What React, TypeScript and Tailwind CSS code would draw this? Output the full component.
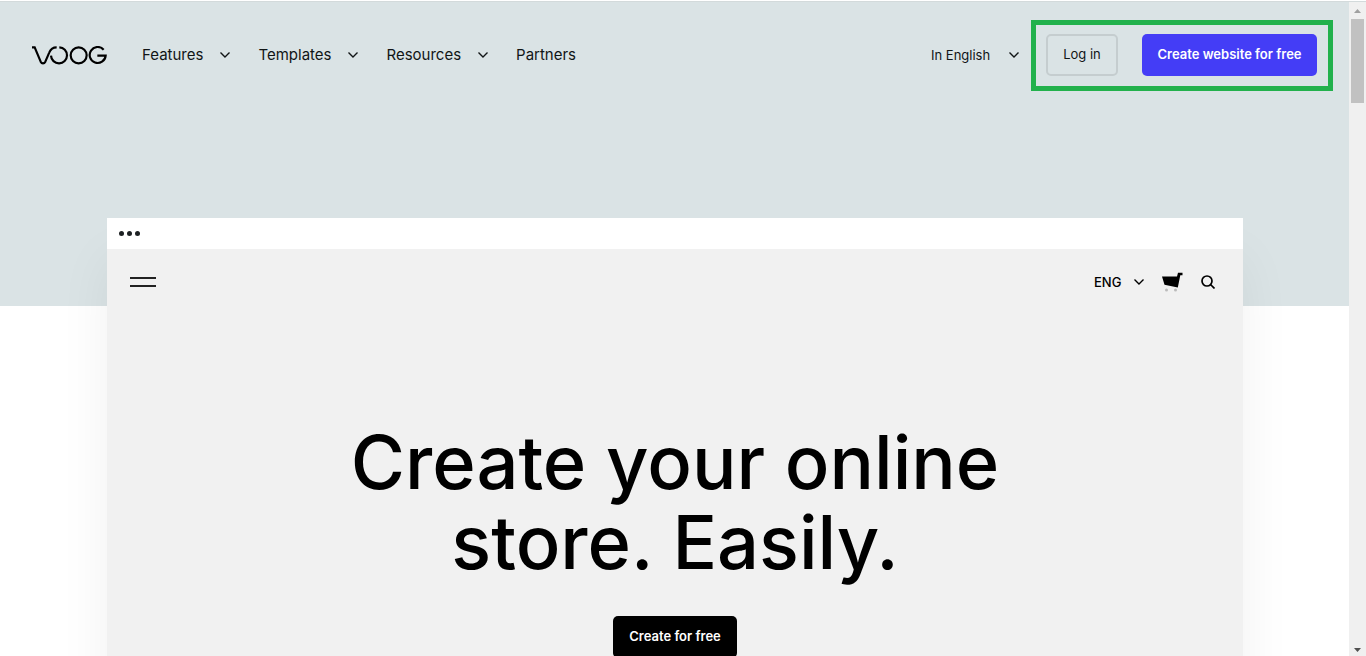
const NAV = [
  { label: 'Features', menu: true },
  { label: 'Templates', menu: true },
  { label: 'Resources', menu: true },
  { label: 'Partners', menu: false },
]

export default function App() {
  return (
    <div className="flex h-screen flex-col overflow-hidden bg-white font-['Inter','Liberation_Sans',sans-serif] text-[#111516]">
      <div className="mt-px h-px shrink-0 bg-[#d3dadb]" />
      <div className="flex min-h-0 flex-1">
        <div className="min-w-0 flex-1 overflow-hidden">
          <Header />
          <StorePreview />
        </div>
        <ScrollRail />
      </div>
    </div>
  )
}

function Header() {
  return (
    <header className="flex h-[304px] items-start justify-between bg-[#dae3e5] pt-[18px] pr-4 pl-8">
      <div className="flex h-[70px] items-center">
        <a href="#" aria-label="Voog" className="mr-[35px]"><Logo /></a>
        <nav className="flex items-center gap-7 text-[15px] leading-5">
          {NAV.map((item) =>
            item.menu ? (
              <button key={item.label} type="button" aria-haspopup="true" className="flex items-center gap-[17px]">
                {item.label}
                <Chevron />
              </button>
            ) : (
              <a key={item.label} href="#">{item.label}</a>
            )
          )}
        </nav>
      </div>
      <div className="flex items-start gap-3">
        <div className="flex h-[70px] items-center">
          <LanguageSelect label="Site language" options={['In English', 'Eesti']} className="gap-[18px] text-[13px]" />
        </div>
        <div className="flex gap-6 border-5 border-[#22b14c] pt-[9px] pr-[11px] pb-[10px] pl-[10px]">
          <a href="#" className="flex h-[42px] w-[72px] items-center justify-center rounded-[5px] border-2 border-[#c5cdcf] text-[13px]">Log in</a>
          <a href="#" className="flex h-[42px] w-[175px] items-center justify-center rounded-[5px] bg-[#443df6] text-[13px] font-semibold whitespace-nowrap text-white">
            Create website for free
          </a>
        </div>
      </div>
    </header>
  )
}

function StorePreview() {
  return (
    <main className="relative -mt-[88px] mr-[106px] ml-[107px] bg-[#f1f1f1] shadow-[0_40px_50px_rgba(0,0,0,0.06)]">
      <div className="flex h-[31px] items-center gap-[3px] bg-white pl-3">
        <Dot /><Dot /><Dot />
      </div>
      <div className="flex h-[66px] items-center justify-between pr-7 pl-[23px]">
        <button type="button" aria-label="Menu" className="flex w-[26px] flex-col gap-[6px]">
          <span className="h-[2px] bg-[#222]" />
          <span className="h-[2px] bg-[#222]" />
        </button>
        <div className="flex items-center text-black">
          <LanguageSelect label="Store language" options={['ENG', 'EST']} className="mr-[18px] gap-3 text-[13px] font-medium" />
          <button type="button" aria-label="Cart" className="mr-[18px]"><Cart /></button>
          <button type="button" aria-label="Search"><Search /></button>
        </div>
      </div>
      <section className="flex flex-col items-center pt-[107px] pb-24 text-black">
        <h1 className="max-w-[800px] text-center text-[74px] leading-[80px] font-medium">
          Create your online store. Easily.
        </h1>
        <a href="#" className="mt-[34px] flex h-[42px] w-[124px] items-center justify-center rounded-[5px] bg-black text-[13px] font-semibold text-white">
          Create for free
        </a>
      </section>
    </main>
  )
}

function LanguageSelect({ label, options, className }: { label: string; options: string[]; className: string }) {
  return (
    <label className={`flex items-center leading-5 ${className}`}>
      <select aria-label={label} className="appearance-none bg-transparent">
        {options.map((o) => <option key={o}>{o}</option>)}
      </select>
      <Chevron />
    </label>
  )
}

function ScrollRail() {
  return (
    <div aria-hidden="true" className="flex w-[17px] shrink-0 flex-col items-center bg-[#f0f0f0]">
      <svg width="17" height="17" viewBox="0 0 17 17" fill="#a0a0a0"><path d="M5 11h7L8.500 7z" /></svg>
      <div className="h-[84px] w-[13px] bg-[#c1c1c1]" />
      <svg className="mt-auto" width="17" height="17" viewBox="0 0 17 17" fill="#505050"><path d="M5 9h7l-3.500 4z" /></svg>
    </div>
  )
}

function Dot() {
  return <span className="h-[5px] w-[5px] rounded-full bg-[#1d2123]" />
}

function Chevron() {
  return (
    <svg width="10" height="6" viewBox="0 0 10 6" fill="none" stroke="currentColor" strokeWidth="1.4">
      <path d="M.5.5 5 5 9.500.5" />
    </svg>
  )
}

function Cart() {
  return (
    <svg width="21" height="20" viewBox="0 0 21 20">
      <path d="M0 4.500h15L16 .800h4.500v2.400h-2.200L15.800 15.500 2.500 12.800z" fill="#000" />
      <circle cx="4.500" cy="18" r="1.500" fill="#bbb" />
      <circle cx="13.500" cy="18" r="1.500" fill="#bbb" />
    </svg>
  )
}

function Search() {
  return (
    <svg width="14" height="14" viewBox="0 0 14 14" fill="none" stroke="currentColor" strokeWidth="1.7">
      <circle cx="6" cy="6" r="5" />
      <path d="m9.500 9.500 4 4" />
    </svg>
  )
}

function Logo() {
  return (
    <svg width="75" height="19" viewBox="0 0 225 57" fill="none" stroke="#000" strokeWidth="6.500">
      <path d="M0 4h8l18 43c2 4 3 5 7 5s5-1 7-5L52 19C56 9 62 4 74 4" />
      <path d="M82 4a24 24 0 1 1-25 25" />
      <circle cx="140" cy="28" r="24" />
      <path d="M215 11A24 24 0 1 0 221 29h-25" />
    </svg>
  )
}
